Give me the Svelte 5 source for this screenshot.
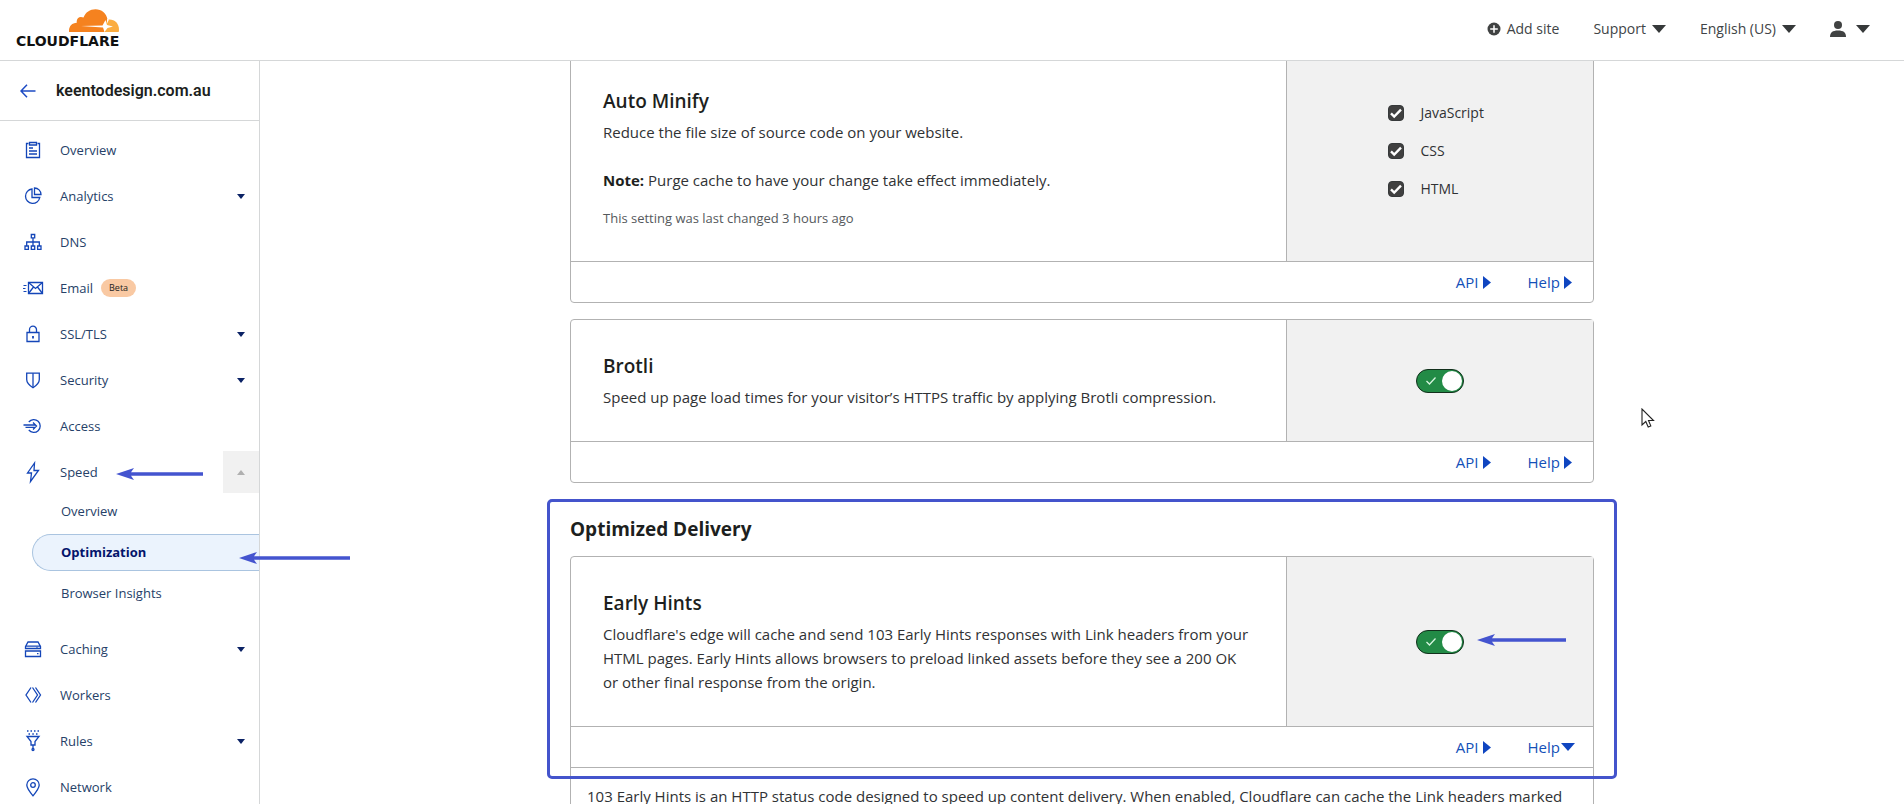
<script>
  const icons = {
    clipboard:
      '<path d="M4.500 2.500h-2v14h13v-14h-2"/><path d="M5.500 1.500h7v2.500h-7z"/><path d="M5 7h4M5 10h8M5 13h8"/>',
    pie: '<path d="M8 2a7.200 7.200 0 1 0 7.800 8.500H8z"/><path d="M10.500 1a6.500 6.500 0 0 1 6.500 6.500h-6.500z"/>',
    tree: '<path d="M7.300 1.500h3.400v3.400H7.300zM1 13h3.400v3.400H1zM7.300 13h3.400v3.400H7.300zM13.600 13H17v3.400h-3.400z"/><path d="M9 5v8M2.700 13V9h12.600v4"/>',
    mail: '<path d="M4.500 3.500h14v11h-14z"/><path d="M4.500 3.500l7 6 7-6M4.500 14.500l5-6.500M18.500 14.500l-5-6.500"/><path stroke-width="1" d="M-.5 6.500h3M-1 9.500h2.500M-.5 12.500h3"/>',
    lock: '<path d="M3 7.500h12v9H3z"/><path d="M5.500 7.500V4.700a3.500 3.500 0 0 1 7 0v2.800"/><path d="M9 11v2.500" stroke-width="1.800"/>',
    shield: '<path d="M2.700 2.200h12.600v6.300c0 3.800-2.800 6-6.300 8.200-3.500-2.200-6.300-4.400-6.300-8.200z"/><path d="M9 2.200v14"/>',
    access:
      '<path d="M4.800 5a6.400 6.400 0 1 1 0 8"/><path d="M-.5 8h12M1.500 10.300h9M9 5.500L12.500 9 9 12.500"/>',
    bolt: '<path d="M10.500 0L3.500 10h4L6.500 18.500 14.500 7.500h-4.500z"/>',
    server:
      '<path d="M1.500 6.500L4 2h10l2.500 4.500v2h-15zM1.500 6.200h15M1.500 11h15v5.500h-15z"/><path d="M13 13.700h1.500M13 6.800v1"/>',
    workers: '<path d="M7 1.500L2 9l5 7.500M8.500 1.500L13.500 9l-5 7.500M11.500 1.500L16.500 9l-5 7.500"/>',
    funnel:
      '<path d="M3 -1h1.500M6.500 -1H8M10 -1h1.500M13.500 -1H15M4.500 2H6M8.300 2h1.500M12 2h1.500"/><path d="M3 4.500h12L11 9.500v3.500H7V9.500z"/><path d="M9 13v3"/><circle cx="9" cy="17.500" r="1"/>',
    pin: '<path d="M9 17.800C5 13 2.800 10 2.800 7a6.200 6.200 0 0 1 12.400 0c0 3-2.200 6-6.200 10.800z"/><circle cx="9" cy="7" r="2.300"/>'
  };

  const items = [
    { label: 'Overview', icon: 'clipboard' },
    { label: 'Analytics', icon: 'pie', menu: true },
    { label: 'DNS', icon: 'tree' },
    { label: 'Email', icon: 'mail', tag: 'Beta' },
    { label: 'SSL/TLS', icon: 'lock', menu: true },
    { label: 'Security', icon: 'shield', menu: true },
    { label: 'Access', icon: 'access' },
    {
      label: 'Speed',
      icon: 'bolt',
      open: true,
      children: ['Overview', 'Optimization', 'Browser Insights']
    },
    { label: 'Caching', icon: 'server', menu: true },
    { label: 'Workers', icon: 'workers' },
    { label: 'Rules', icon: 'funnel', menu: true },
    { label: 'Network', icon: 'pin' }
  ];

  let minify = $state([
    { name: 'JavaScript', on: true },
    { name: 'CSS', on: true },
    { name: 'HTML', on: true }
  ]);
  let brotli = $state(true);
  let hints = $state(true);
  let helpOpen = $state(true);
</script>

{#snippet caret()}
  <svg class="caret" width="14" height="8" viewBox="0 0 14 8" aria-hidden="true"><path d="M0 0h14L7 8z" /></svg>
{/snippet}

{#snippet arrow(length, name)}
  <svg class="arrow {name}" width={length} height="14" aria-hidden="true">
    <path d="M0 7L18 1L15 5.200H{length - 1}V8.800H15L18 13z" />
  </svg>
{/snippet}

{#snippet footer(open, toggle)}
  <div class="foot">
    <button type="button">API<span class="tick"><svg width="8" height="13" viewBox="0 0 8 13" aria-hidden="true"><path d="M0 0l8 6.500L0 13z" /></svg></span></button>
    <button type="button" aria-expanded={open} onclick={toggle}>Help<span class="tick">
      {#if open}
        <svg width="14" height="8" viewBox="0 0 14 8" aria-hidden="true"><path d="M0 0h14L7 8z" /></svg>
      {:else}
        <svg width="8" height="13" viewBox="0 0 8 13" aria-hidden="true"><path d="M0 0l8 6.500L0 13z" /></svg>
      {/if}
    </span></button>
  </div>
{/snippet}

<div class="app">
  <header>
    <a class="logo" href="#home" aria-label="Cloudflare">
      <svg width="50" height="23" viewBox="0 0 50 23" aria-hidden="true">
        <path fill="#f5821f" d="M0 23c-.3-5.500 2.500-9 7.800-9.300C7 9.500 10.500 6.700 14.500 8.600 16.500 3.200 21 .2 26.500.2c6 0 11 4 12 10.300L35 23z" />
        <path fill="#fbad41" d="M35 23l3-12.200c6.500-1.500 12 3 12 9.700 0 1-.1 1.800-.3 2.500z" />
        <path fill="#fff" d="M12 16.900L33.500 16.400 36.500 11l1.500 5 6 1.500-5.500 1.500L35.500 23l-1.500-4.500zM38 10l2 .5-2 4z" />
      </svg>
      <span>CLOUDFLARE</span>
    </a>
    <div class="tools">
      <button type="button">
        <svg width="14" height="14" viewBox="0 0 14 14" aria-hidden="true"><circle cx="7" cy="7" r="6.500" fill="#404242" /><path d="M7 3.200v7.600M3.200 7h7.600" stroke="#fff" stroke-width="1.500" /></svg>
        Add site
      </button>
      <button type="button">Support {@render caret()}</button>
      <button type="button">English (US) {@render caret()}</button>
      <button type="button" class="user" aria-label="Account">
        <svg width="16" height="16" viewBox="0 0 16 16" aria-hidden="true"><circle cx="8" cy="4" r="4" fill="#404242" /><path d="M0 16c0-4.500 2.500-6.500 8-6.500s8 2 8 6.500z" fill="#404242" /></svg>
        {@render caret()}
      </button>
    </div>
  </header>

  <div class="body">
    <aside>
      <div class="site">
        <a href="#back" aria-label="Back to sites">
          <svg width="16" height="14" viewBox="0 0 16 14" fill="none" stroke="#1d4bc4" stroke-width="1.500" aria-hidden="true"><path d="M15.500 7H1M7 .7L1 7l6 6.300" /></svg>
        </a>
        <strong>keentodesign.com.au</strong>
      </div>
      <nav>
        <ul class="menu">
          {#each items as item}
            <li>
              <div class="row">
                <a href="#{item.label.toLowerCase()}">
                  <svg class="icon" width="18" height="18" viewBox="0 0 18 18" fill="none" stroke="#1446b8" stroke-width="1.300" aria-hidden="true">{@html icons[item.icon]}</svg>
                  {item.label}
                  {#if item.tag}<span class="tag">{item.tag}</span>{/if}
                </a>
                {#if item.menu || item.open}
                  <button type="button" class="expand" class:open={item.open} aria-label="Toggle {item.label}">
                    <svg width="8" height="5" viewBox="0 0 8 5" aria-hidden="true"><path d={item.open ? 'M0 5h8L4 0z' : 'M0 0h8L4 5z'} /></svg>
                  </button>
                {/if}
                {#if item.open}{@render arrow(88, 'at-speed')}{/if}
              </div>
              {#if item.children}
                <ul class="sub">
                  {#each item.children as child}
                    <li class:active={child === 'Optimization'}>
                      <a href="#speed">{child}</a>
                      {#if child === 'Optimization'}{@render arrow(112, 'at-active')}{/if}
                    </li>
                  {/each}
                </ul>
              {/if}
            </li>
          {/each}
        </ul>
      </nav>
    </aside>

    <main>
      <div class="column">
        <section class="card">
          <div class="top">
            <div class="info">
              <h3>Auto Minify</h3>
              <p>Reduce the file size of source code on your website.</p>
              <p class="note"><b>Note:</b> Purge cache to have your change take effect immediately.</p>
              <p class="changed">This setting was last changed 3 hours ago</p>
            </div>
            <div class="control">
              <div class="checks">
                {#each minify as option}
                  <label>
                    <span class="box">
                      <input type="checkbox" bind:checked={option.on} />
                      <svg width="16" height="16" viewBox="0 0 16 16" fill="none" stroke="#fff" stroke-width="2.400" aria-hidden="true"><path d="M3 8.300l3.200 3.200L13 4.700" /></svg>
                    </span>
                    {option.name}
                  </label>
                {/each}
              </div>
            </div>
          </div>
          {@render footer(false)}
        </section>

        <section class="card">
          <div class="top">
            <div class="info">
              <h3>Brotli</h3>
              <p>Speed up page load times for your visitor’s HTTPS traffic by applying Brotli compression.</p>
            </div>
            <div class="control">
              <label class="switch">
                <input type="checkbox" role="switch" aria-label="Brotli" bind:checked={brotli} />
                <svg width="10" height="8" viewBox="0 0 10 8" aria-hidden="true"><path d="M.5 4l3 3 6-6.500" /></svg>
              </label>
            </div>
          </div>
          {@render footer(false)}
        </section>

        <div class="group">
          <h2>Optimized Delivery</h2>
          <section class="card">
            <div class="top">
              <div class="info">
                <h3>Early Hints</h3>
                <p>Cloudflare's edge will cache and send 103 Early Hints responses with Link headers from your HTML pages. Early Hints allows browsers to preload linked assets before they see a 200 OK or other final response from the origin.</p>
              </div>
              <div class="control">
                <label class="switch">
                  <input type="checkbox" role="switch" aria-label="Early Hints" bind:checked={hints} />
                  <svg width="10" height="8" viewBox="0 0 10 8" aria-hidden="true"><path d="M.5 4l3 3 6-6.500" /></svg>
                  {@render arrow(90, 'at-switch')}
                </label>
              </div>
            </div>
            {@render footer(helpOpen, () => (helpOpen = !helpOpen))}
            {#if helpOpen}
              <p class="help">103 Early Hints is an HTTP status code designed to speed up content delivery. When enabled, Cloudflare can cache the Link headers marked</p>
            {/if}
          </section>
          <div class="outline"></div>
        </div>
      </div>
      <svg class="cursor" width="14" height="21" viewBox="0 0 14 21" aria-hidden="true"><path d="M1 1v16l3.800-3.500L7.200 19l2.600-1.100L7.500 12.500H12.500z" fill="#fff" stroke="#222" stroke-width="1.100" /></svg>
    </main>
  </div>
</div>

<style>
  :global(body) {
    background: #fff;
  }

  .app {
    display: flex;
    flex-direction: column;
    height: 100vh;
    overflow: hidden;
    color: #303234;
    font: 15px/24px 'Open Sans', 'Noto Sans', sans-serif;
  }

  h2,
  h3,
  p,
  ul {
    margin: 0;
    padding: 0;
    list-style: none;
  }

  h2,
  h3,
  b {
    color: #1d1f20;
  }

  a {
    color: inherit;
    text-decoration: none;
  }

  button {
    padding: 0;
    border: 0;
    background: none;
    color: inherit;
    font: inherit;
    cursor: pointer;
  }

  header {
    display: flex;
    justify-content: space-between;
    flex: none;
    height: 60px;
    border-bottom: 1px solid #d5d7d8;
    background: #fff;
    z-index: 1;
  }

  .logo {
    display: flex;
    flex-direction: column;
    align-items: flex-end;
    gap: 2px;
    padding: 9px 0 0 16px;
    color: #111;
    font: 700 14px/14px 'DejaVu Sans', sans-serif;
  }

  .tools {
    display: flex;
    align-items: center;
    gap: 34px;
    padding: 0 34px 2px 0;
    color: #404446;
    font-size: 14px;
  }

  .tools button {
    display: flex;
    align-items: center;
    gap: 6px;
  }

  .tools .user {
    gap: 10px;
  }

  .caret {
    fill: #36393a;
  }

  .body {
    display: flex;
    flex: 1;
    min-height: 0;
  }

  aside {
    flex: none;
    width: 259px;
    border-right: 1px solid #d5d7d8;
    z-index: 1;
  }

  .site {
    display: flex;
    align-items: center;
    gap: 20px;
    height: 59px;
    padding-left: 20px;
    border-bottom: 1px solid #d5d7d8;
    color: #1d1f20;
    font: 16px/20px Roboto, sans-serif;
  }

  .site a {
    display: flex;
  }

  .site strong {
    font-weight: 600;
  }

  .menu {
    display: flex;
    flex-direction: column;
    gap: 4px;
    padding-top: 8px;
    color: #264168;
    font-size: 13px;
  }

  .row {
    position: relative;
    display: flex;
    justify-content: space-between;
    height: 42px;
  }

  .row a {
    display: flex;
    flex: 1;
    align-items: center;
    padding-left: 24px;
  }

  .icon {
    margin-right: 18px;
    overflow: visible;
  }

  .tag {
    margin-left: 8px;
    padding: 0 8px;
    border-radius: 9px;
    background: #f9c9a3;
    color: #222;
    font-size: 9px;
    line-height: 18px;
  }

  .expand {
    display: flex;
    align-items: center;
    justify-content: center;
    width: 36px;
    fill: #0b2265;
  }

  .expand.open {
    background: #f1f1f1;
    fill: #b0b0b0;
  }

  .sub {
    display: flex;
    flex-direction: column;
    gap: 4px;
    padding: 0 0 12px 32px;
  }

  .sub li {
    position: relative;
    box-sizing: border-box;
    height: 37px;
    padding-left: 28px;
    border: 1px solid transparent;
    border-right: 0;
    line-height: 34px;
  }

  .sub .active {
    border-color: #aac4e0;
    border-radius: 19px 0 0 19px;
    background: #ebf3fd;
    color: #03146b;
    font-weight: 700;
  }

  .arrow {
    position: absolute;
    fill: #4454cf;
  }

  .at-speed {
    left: 116px;
    top: 16px;
  }

  .at-active {
    right: -92px;
    top: 16px;
  }

  .at-switch {
    left: 61px;
    top: 3px;
  }

  main {
    position: relative;
    flex: 1;
    min-width: 0;
    padding: 0 16px;
  }

  .column {
    display: flex;
    flex-direction: column;
    gap: 16px;
    max-width: 1024px;
    margin: -7px auto 0;
  }

  .card {
    border: 1px solid #b2b2b2;
    border-radius: 4px;
    background: #fff;
  }

  .top {
    display: grid;
    grid-template-columns: 7fr 3fr;
  }

  .info {
    padding: 32px;
  }

  h3 {
    margin-bottom: 5px;
    font-size: 19px;
    font-weight: 600;
    line-height: 28px;
  }

  .note {
    margin-top: 24px;
  }

  .changed {
    margin-top: 16px;
    color: #55595c;
    font-size: 13px;
    line-height: 21px;
  }

  .control {
    display: flex;
    align-items: center;
    justify-content: center;
    border-left: 1px solid #b2b2b2;
    background: #f1f1f1;
  }

  .checks {
    padding: 2px 8px 0 0;
    font-size: 14px;
  }

  .checks label {
    display: flex;
    align-items: center;
    gap: 16px;
    margin-bottom: 16px;
    line-height: 22px;
  }

  .box {
    display: grid;
  }

  .box > * {
    grid-area: 1 / 1;
  }

  .box input {
    width: 16px;
    height: 16px;
    margin: 0;
    border: 1px solid #36393a;
    border-radius: 4px;
    background: #fff;
    appearance: none;
  }

  .box input:checked {
    background: #404040;
  }

  .box svg {
    pointer-events: none;
  }

  .switch {
    position: relative;
    display: grid;
    align-items: center;
  }

  .switch > input,
  .switch > svg:not(.arrow) {
    grid-area: 1 / 1;
  }

  .switch input {
    display: flex;
    box-sizing: border-box;
    width: 48px;
    height: 24px;
    margin: 0;
    padding: 1px;
    border: 1px solid #12301c;
    border-radius: 12px;
    background: #8a8a8a;
    appearance: none;
  }

  .switch input::before {
    width: 20px;
    height: 20px;
    border-radius: 50%;
    background: #fff;
    content: '';
  }

  .switch input:checked {
    justify-content: flex-end;
    background: #228b46;
  }

  .switch > svg:not(.arrow) {
    margin-left: 10px;
    fill: none;
    stroke: #d6f5df;
    stroke-width: 1.3;
    pointer-events: none;
  }

  .foot {
    display: flex;
    justify-content: flex-end;
    gap: 33px;
    height: 40px;
    padding-right: 17px;
    border-top: 1px solid #b2b2b2;
    color: #1450b8;
  }

  .foot button {
    display: flex;
    align-items: center;
  }

  .tick {
    display: flex;
    justify-content: center;
    width: 16px;
    fill: #0f45c0;
  }

  .group {
    position: relative;
  }

  h2 {
    padding: 17px 0 14px;
    font-size: 19px;
    font-weight: 700;
    line-height: 26px;
  }

  .help {
    padding: 16px;
    border-top: 1px solid #b2b2b2;
  }

  .outline {
    position: absolute;
    top: 0;
    left: -23px;
    right: -23px;
    height: 274px;
    border: 3px solid #4454cc;
    border-radius: 5px;
    pointer-events: none;
  }

  .cursor {
    position: absolute;
    top: 347px;
    left: calc(50% + 559px);
  }
</style>
